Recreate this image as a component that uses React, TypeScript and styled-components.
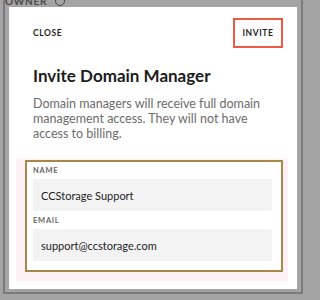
import React from 'react';
import styled, { createGlobalStyle } from 'styled-components';

const GlobalStyle = createGlobalStyle`
  html, body {
    margin: 0;
    padding: 0;
    background: #a4a4a4;
  }
  body {
    font-family: Lato, "Noto Sans", "Liberation Sans", sans-serif;
    -webkit-font-smoothing: antialiased;
  }
`;

const Screen = styled.div`
  width: 306px;
  height: 300px;
  box-sizing: border-box;
  padding: 0 3px 6px 3px;
  background: #a4a4a4;
  overflow: hidden;
`;

const Frame = styled.div`
  height: 100%;
  box-sizing: border-box;
  border: 2px solid #7b7b7b;
  border-top: none;
  padding: 0 4px 3px 4px;
  display: flex;
  flex-direction: column;
`;

const BackdropLabel = styled.div`
  height: 7px;
  overflow: hidden;
  display: flex;
  align-items: flex-end;
  gap: 8px;
  margin-left: -4px;
  color: #4a4a4a;
  font-size: 10px;
  font-weight: 700;
  letter-spacing: 0.08em;
  line-height: 12px;
  span {
    flex: none;
  }
`;

const InfoDot = styled.span`
  width: 8px;
  height: 8px;
  border: 1.5px solid #4a4a4a;
  border-radius: 50%;
  margin-bottom: 1px;
`;

const Modal = styled.div`
  flex: 1;
  background: #ffffff;
  padding: 11px 14px 0 24px;
  display: flex;
  flex-direction: column;
`;

const Header = styled.div`
  display: flex;
  justify-content: space-between;
  align-items: center;
  height: 30px;
`;

const TextButton = styled.button<{ $outlined?: boolean }>`
  font-family: inherit;
  font-size: 8.5px;
  font-weight: 700;
  letter-spacing: 0.07em;
  color: #1f1f1f;
  background: none;
  padding: 0;
  height: 30px;
  cursor: pointer;
  border: ${({ $outlined }) => ($outlined ? '2px solid #ea5a45' : 'none')};
  width: ${({ $outlined }) => ($outlined ? '50px' : 'auto')};
  box-sizing: border-box;
`;

const Title = styled.h1`
  margin: 17px 0 0 0;
  font-size: 17px;
  line-height: 22px;
  font-weight: 700;
  color: #1c1c1c;
`;

const Description = styled.p`
  margin: 9px 0 0 0;
  font-size: 12.5px;
  line-height: 15px;
  color: #6c6c6c;
  padding-right: 20px;
`;

const Highlight = styled.div`
  margin: 18px -5px 0 -17px;
  padding: 1px 5px 9px 9px;
  background: #fdf1f6;
`;

const Form = styled.div`
  border: 2px solid #a8874a;
  background: #ffffff;
  padding: 3px 9px 9px 6px;
  display: flex;
  flex-direction: column;
`;

const Label = styled.label<{ $gap?: number }>`
  display: block;
  font-size: 7.5px;
  line-height: 12px;
  font-weight: 700;
  letter-spacing: 0.1em;
  color: #666666;
  margin-top: ${({ $gap }) => $gap ?? 0}px;
  margin-bottom: 2px;
`;

const Field = styled.div`
  height: 32px;
  background: #f3f3f4;
  display: flex;
  align-items: center;
  padding-left: 8px;
  font-size: 11px;
  color: #1e1e1e;
`;

const App: React.FC = () => {
  return (
    <>
      <GlobalStyle />
      <Screen>
        <Frame>
          <BackdropLabel>
            <span>OWNER</span>
            <InfoDot />
          </BackdropLabel>
          <Modal>
            <Header>
              <TextButton>CLOSE</TextButton>
              <TextButton $outlined>INVITE</TextButton>
            </Header>
            <Title>Invite Domain Manager</Title>
            <Description>
              Domain managers will receive full domain management access. They will not have access to billing.
            </Description>
            <Highlight>
              <Form>
                <Label>NAME</Label>
                <Field>CCStorage Support</Field>
                <Label $gap={4}>EMAIL</Label>
                <Field>support@ccstorage.com</Field>
              </Form>
            </Highlight>
          </Modal>
        </Frame>
      </Screen>
    </>
  );
};

export default App;
